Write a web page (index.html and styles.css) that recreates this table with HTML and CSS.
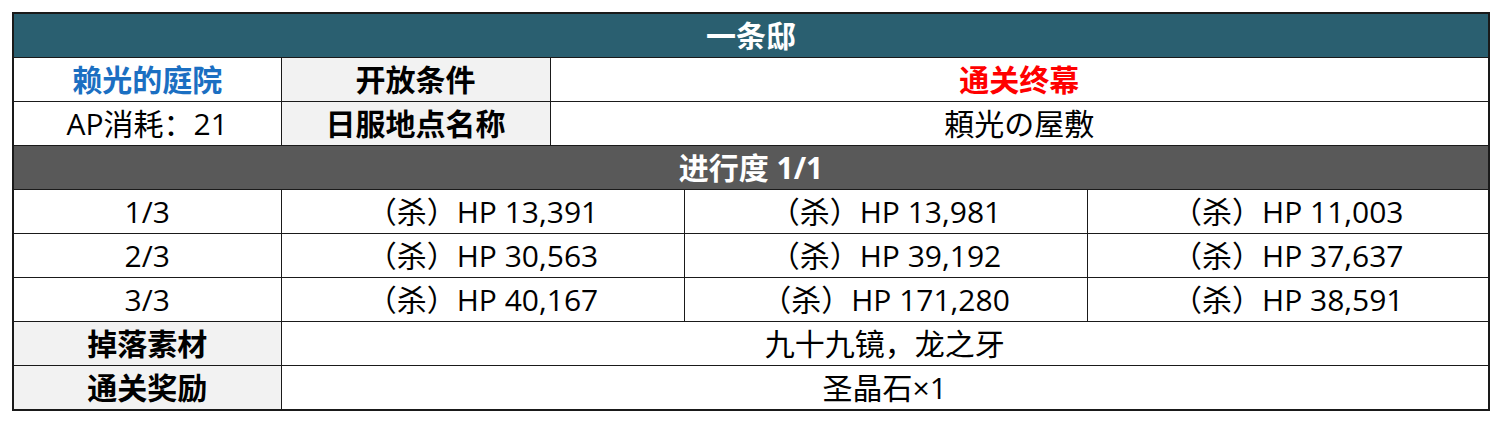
FILE: index.html
```html
<!DOCTYPE html>
<html lang="zh-CN">
<head>
<meta charset="utf-8">
<link rel="stylesheet" href="styles.css">
</head>
<body>
<table class="quest">
  <colgroup>
    <col class="c-a"><col class="c-b"><col class="c-c"><col class="c-d"><col class="c-e">
  </colgroup>
  <tbody>
    <tr><td colspan="5" class="title">一条邸</td></tr>
    <tr>
      <td class="blue">赖光的庭院</td>
      <td class="label">开放条件</td>
      <td colspan="3" class="red">通关终幕</td>
    </tr>
    <tr>
      <td>AP消耗：21</td>
      <td class="label">日服地点名称</td>
      <td colspan="3">頼光の屋敷</td>
    </tr>
    <tr><td colspan="5" class="progress">进行度 1/1</td></tr>
    <tr>
      <td>1/3</td>
      <td colspan="2">（杀）HP 13,391</td>
      <td>（杀）HP 13,981</td>
      <td>（杀）HP 11,003</td>
    </tr>
    <tr>
      <td>2/3</td>
      <td colspan="2">（杀）HP 30,563</td>
      <td>（杀）HP 39,192</td>
      <td>（杀）HP 37,637</td>
    </tr>
    <tr>
      <td>3/3</td>
      <td colspan="2">（杀）HP 40,167</td>
      <td>（杀）HP 171,280</td>
      <td>（杀）HP 38,591</td>
    </tr>
    <tr>
      <td class="label">掉落素材</td>
      <td colspan="4">九十九镜，龙之牙</td>
    </tr>
    <tr>
      <td class="label">通关奖励</td>
      <td colspan="4">圣晶石×1</td>
    </tr>
  </tbody>
</table>
</body>
</html>
```

FILE: styles.css
```css
html, body {
  margin: 0;
  padding: 0;
  background: #ffffff;
}
body {
  padding: 12px 0 0 12px;
}
.quest {
  border-collapse: collapse;
  table-layout: fixed;
  width: 1476px;
  border: 2px solid #1a1a1a;
  font-family: "Open Sans", "Noto Sans CJK SC", sans-serif;
  font-size: 30px;
  color: #000;
}
.c-a { width: 268px; }
.c-b { width: 269px; }
.c-c { width: 134px; }
.c-d { width: 403px; }
.c-e { width: 402px; }
.quest td {
  border: 1px solid #1a1a1a;
  height: 43px;
  padding: 0;
  text-align: center;
  vertical-align: middle;
  line-height: 1;
  white-space: nowrap;
}
.quest .title {
  background: #2a5f70;
  color: #fff;
  font-weight: bold;
}
.quest .progress {
  background: #595959;
  color: #fff;
  font-weight: bold;
}
.quest .label {
  background: #f2f2f2;
  font-weight: bold;
}
.quest .blue {
  color: #1b6fc2;
  font-weight: bold;
}
.quest .red {
  color: #ff0000;
  font-weight: bold;
}
```
